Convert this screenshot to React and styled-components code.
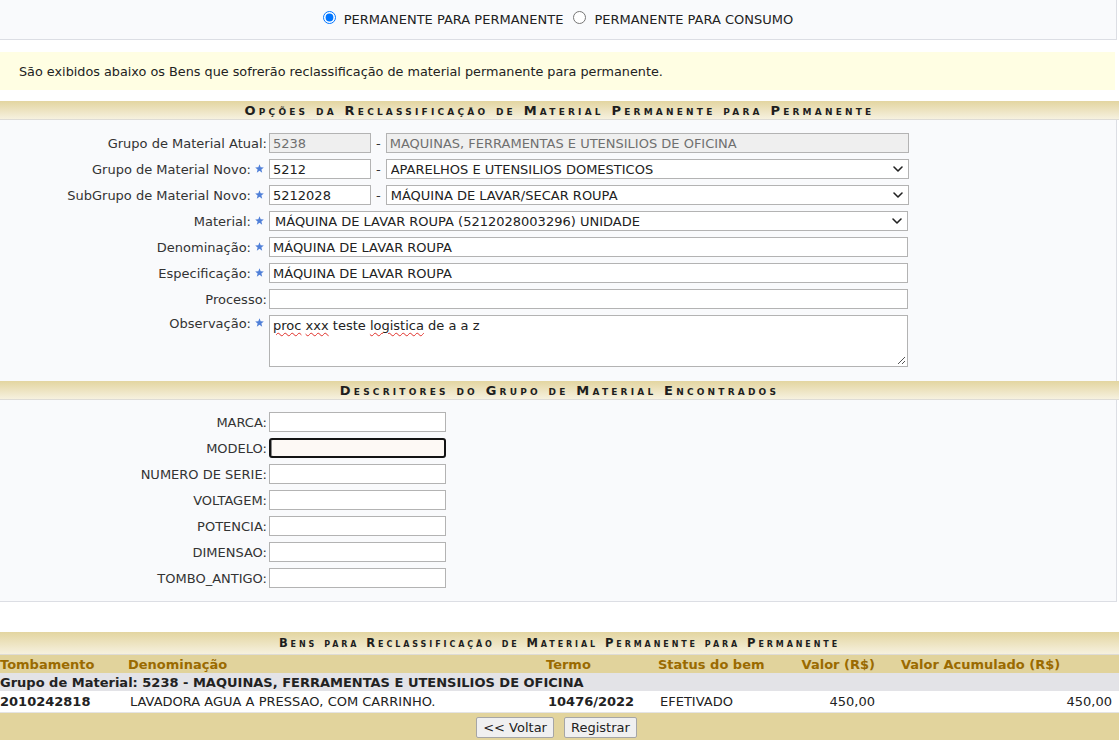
import React from 'react';
import styled, { createGlobalStyle } from 'styled-components';
import { ChevronDown } from 'lucide-react';

const GlobalStyle = createGlobalStyle`
    body {
        margin: 0;
        background: #ffffff;
        font-family: "DejaVu Sans", Verdana, sans-serif;
        font-size: 13px;
        color: #222222;
    }
`

const Page = styled.div`
    width: 1119px;
    overflow: hidden;
`

const ModeBar = styled.div`
    width: 1116px;
    height: 39px;
    background: #f9fafc;
    border-right: 1px solid #dcdee4;
    border-bottom: 1px solid #dcdee4;
    display: flex;
    justify-content: center;
    align-items: center;
    gap: 10px;
`

const RadioLabel = styled.label`
    display: flex;
    align-items: center;
    gap: 8px;
    color: #222;

    input {
        width: 13px;
        height: 13px;
        margin: 0 0 5px 0;
        accent-color: #0075ff;
    }
`

const Notice = styled.div`
    width: 1096px;
    height: 38px;
    margin-top: 12px;
    padding-left: 19px;
    background: #fffee3;
    display: flex;
    align-items: center;
    font-size: 12.8px;
    color: #222;
`

const SectionTitle = styled.div`
    margin-top: ${p => p.$gap || 0}px;
    height: ${p => p.$height || 18}px;
    background: linear-gradient(to bottom, #e3d5a0, #f6f1df);
    border-bottom: 1px solid #dedcd6;
    display: flex;
    align-items: center;
    justify-content: center;
    font-weight: bold;
    font-variant: small-caps;
    font-size: ${p => p.$size || 13}px;
    letter-spacing: ${p => p.$spacing || 3.2}px;
    color: #1e1e1e;
`

const Panel = styled.div`
    width: 1116px;
    background: #f9fafc;
    border-right: 1px solid #dcdee4;
    border-bottom: ${p => (p.$closed ? '1px solid #dcdee4' : 'none')};
    padding: ${p => p.$pad};
`

const FormGrid = styled.div`
    display: grid;
    grid-template-columns: 267px 1fr;
    column-gap: 2px;
    row-gap: 6px;
    align-items: center;
`

const Label = styled.div`
    display: flex;
    justify-content: flex-end;
    align-items: center;
    align-self: ${p => (p.$top ? 'start' : 'center')};
    padding-top: ${p => (p.$top ? '1px' : '0')};
    color: #333;
    white-space: nowrap;
`

const Star = styled.svg`
    width: 9px;
    height: 9px;
    margin: 0 3px 2px 4px;
`

const FieldRow = styled.div`
    display: flex;
    align-items: center;
`

const Dash = styled.span`
    padding: 0 5px 0 5px;
    color: #333;
`

const TextInput = styled.input`
    box-sizing: border-box;
    width: ${p => p.$w}px;
    height: 20px;
    padding: 0 3px;
    font-family: inherit;
    font-size: 13px;
    color: ${p => (p.disabled ? '#6f6f6f' : '#222')};
    background: ${p => (p.disabled ? '#efefef' : p.$focused ? '#fdf9f5' : '#ffffff')};
    border: ${p => (p.$focused ? '2px solid #141414' : '1px solid #b3b3b3')};
    border-radius: ${p => (p.$focused ? '3px' : '0')};
    outline: none;
    box-shadow: ${p => (p.$focused ? 'inset 1px 0 0 0 #8a8a8a' : 'none')};
`

const SelectWrap = styled.div`
    position: relative;
    width: ${p => p.$w}px;
    height: 20px;

    svg {
        position: absolute;
        right: 3px;
        top: 2px;
        pointer-events: none;
    }
`

const Select = styled.select`
    appearance: none;
    box-sizing: border-box;
    width: 100%;
    height: 20px;
    padding: 0 20px 0 ${p => p.$pad || 4}px;
    font-family: inherit;
    font-size: 13px;
    color: #222;
    background: #ffffff;
    border: 1px solid #b3b3b3;
    border-radius: 0;
    outline: none;
`

const NoteBox = styled.div`
    position: relative;
    box-sizing: border-box;
    width: 639px;
    height: 52px;
    padding: 2px 3px;
    background: #ffffff;
    border: 1px solid #b3b3b3;
    color: #222;
`

const Typo = styled.span`
    text-decoration: underline wavy #e0302a;
    text-decoration-thickness: 1px;
    text-underline-offset: 2px;
`

const Grip = styled.svg`
    position: absolute;
    right: 1px;
    bottom: 1px;
    width: 10px;
    height: 10px;
`

const Gap = styled.div`
    height: ${p => p.$h}px;
`

const Table = styled.table`
    width: 1119px;
    border-collapse: collapse;
    table-layout: fixed;
    font-size: 13px;
`

const HeadCell = styled.th`
    height: 18px;
    padding: 0 ${p => p.$right || 0}px 0 ${p => p.$left || 0}px;
    background: #e1d39c;
    color: #9a6a00;
    font-weight: bold;
    text-align: ${p => p.$align || 'left'};
    white-space: nowrap;
`

const GroupCell = styled.td`
    height: 18px;
    padding: 0;
    background: #e3e3e7;
    font-weight: bold;
    white-space: nowrap;
`

const Cell = styled.td`
    height: 21px;
    padding: 0 ${p => p.$right || 0}px 0 ${p => p.$left ?? 2}px;
    background: #ffffff;
    border-bottom: 1px solid #e4e4e4;
    font-weight: ${p => (p.$bold ? 'bold' : 'normal')};
    text-align: ${p => p.$align || 'left'};
    white-space: nowrap;
`

const FootCell = styled.td`
    background: #e2d49d;
    padding: 4px 0 6px;
`

const Buttons = styled.div`
    display: flex;
    justify-content: center;
    gap: 10px;
    padding-right: 6px;
`

const Button = styled.button`
    height: 21px;
    padding: 0 6px;
    font-family: inherit;
    font-size: 13px;
    color: #222;
    background: #f0f0f0;
    border: 1px solid #a6a6a6;
    border-radius: 2px;
`

function Required() {
    return (
        <Star viewBox="0 0 10 10">
            <polygon points="5,0.3 6.3,3.6 9.8,3.8 7.1,6 8,9.6 5,7.6 2,9.6 2.9,6 0.2,3.8 3.7,3.6" fill="#4f7fd8" />
        </Star>
    )
}

function FieldLabel({ text, required, top }) {
    return (
        <Label $top={top}>
            {text}
            {required && <Required />}
        </Label>
    )
}

function Dropdown({ width, value, pad }) {
    return (
        <SelectWrap $w={width}>
            <Select $pad={pad} value={value} onChange={() => {}}>
                <option>{value}</option>
            </Select>
            <ChevronDown size={16} strokeWidth={2.4} color="#222" />
        </SelectWrap>
    )
}

const descritores = ['MARCA', 'MODELO', 'NUMERO DE SERIE', 'VOLTAGEM', 'POTENCIA', 'DIMENSAO', 'TOMBO_ANTIGO'];

export default function App() {
    return (
        <Page>
            <GlobalStyle />
            <ModeBar>
                <RadioLabel>
                    <input type="radio" name="tipo" defaultChecked />
                    PERMANENTE PARA PERMANENTE
                </RadioLabel>
                <RadioLabel>
                    <input type="radio" name="tipo" />
                    PERMANENTE PARA CONSUMO
                </RadioLabel>
            </ModeBar>

            <Notice>São exibidos abaixo os Bens que sofrerão reclassificação de material permanente para permanente.</Notice>

            <SectionTitle $gap={11}>Opções da Reclassificação de Material Permanente para Permanente</SectionTitle>
            <Panel $pad="13px 0 14px">
                <FormGrid>
                    <FieldLabel text="Grupo de Material Atual:" />
                    <FieldRow>
                        <TextInput $w={102} value="5238" disabled readOnly />
                        <Dash>-</Dash>
                        <TextInput $w={523} value="MAQUINAS, FERRAMENTAS E UTENSILIOS DE OFICINA" disabled readOnly />
                    </FieldRow>

                    <FieldLabel text="Grupo de Material Novo:" required />
                    <FieldRow>
                        <TextInput $w={102} defaultValue="5212" />
                        <Dash>-</Dash>
                        <Dropdown width={523} value="APARELHOS E UTENSILIOS DOMESTICOS" />
                    </FieldRow>

                    <FieldLabel text="SubGrupo de Material Novo:" required />
                    <FieldRow>
                        <TextInput $w={102} defaultValue="5212028" />
                        <Dash>-</Dash>
                        <Dropdown width={523} value="MÁQUINA DE LAVAR/SECAR ROUPA" />
                    </FieldRow>

                    <FieldLabel text="Material:" required />
                    <Dropdown width={639} pad={5} value="MÁQUINA DE LAVAR ROUPA (5212028003296) UNIDADE" />

                    <FieldLabel text="Denominação:" required />
                    <TextInput $w={639} defaultValue="MÁQUINA DE LAVAR ROUPA" />

                    <FieldLabel text="Especificação:" required />
                    <TextInput $w={639} defaultValue="MÁQUINA DE LAVAR ROUPA" />

                    <FieldLabel text="Processo:" />
                    <TextInput $w={639} defaultValue="" />

                    <FieldLabel text="Observação:" required top />
                    <NoteBox>
                        <Typo>proc</Typo> <Typo>xxx</Typo> teste <Typo>logistica</Typo> de a a z
                        <Grip viewBox="0 0 10 10">
                            <line x1="9" y1="2" x2="2" y2="9" stroke="#555" strokeWidth="1" />
                            <line x1="9" y1="6" x2="6" y2="9" stroke="#555" strokeWidth="1" />
                        </Grip>
                    </NoteBox>
                </FormGrid>
            </Panel>

            <SectionTitle>Descritores do Grupo de Material Encontrados</SectionTitle>
            <Panel $pad="12px 0 13px" $closed>
                <FormGrid>
                    {descritores.map(d => (
                        <React.Fragment key={d}>
                            <FieldLabel text={`${d}:`} />
                            <TextInput $w={177} defaultValue="" $focused={d === 'MODELO'} />
                        </React.Fragment>
                    ))}
                </FormGrid>
            </Panel>

            <Gap $h={30} />

            <SectionTitle $height={22} $size={11.5} $spacing={2.9}>Bens para Reclassificação de Material Permanente para Permanente</SectionTitle>
            <Table>
                <colgroup>
                    <col style={{ width: 128 }} />
                    <col style={{ width: 418 }} />
                    <col style={{ width: 112 }} />
                    <col style={{ width: 140 }} />
                    <col style={{ width: 82 }} />
                    <col />
                </colgroup>
                <thead>
                    <tr>
                        <HeadCell>Tombamento</HeadCell>
                        <HeadCell>Denominação</HeadCell>
                        <HeadCell>Termo</HeadCell>
                        <HeadCell>Status do bem</HeadCell>
                        <HeadCell $align="right" $right={5}>Valor (R$)</HeadCell>
                        <HeadCell $left={21}>Valor Acumulado (R$)</HeadCell>
                    </tr>
                </thead>
                <tbody>
                    <tr>
                        <GroupCell colSpan={6}>Grupo de Material: 5238 - MAQUINAS, FERRAMENTAS E UTENSILIOS DE OFICINA</GroupCell>
                    </tr>
                    <tr>
                        <Cell $bold $left={0}>2010242818</Cell>
                        <Cell>LAVADORA AGUA A PRESSAO, COM CARRINHO.</Cell>
                        <Cell $bold>10476/2022</Cell>
                        <Cell>EFETIVADO</Cell>
                        <Cell $align="right" $right={5}>450,00</Cell>
                        <Cell $align="right" $right={7}>450,00</Cell>
                    </tr>
                </tbody>
                <tfoot>
                    <tr>
                        <FootCell colSpan={6}>
                            <Buttons>
                                <Button>&lt;&lt; Voltar</Button>
                                <Button>Registrar</Button>
                            </Buttons>
                        </FootCell>
                    </tr>
                </tfoot>
            </Table>
        </Page>
    )
}
